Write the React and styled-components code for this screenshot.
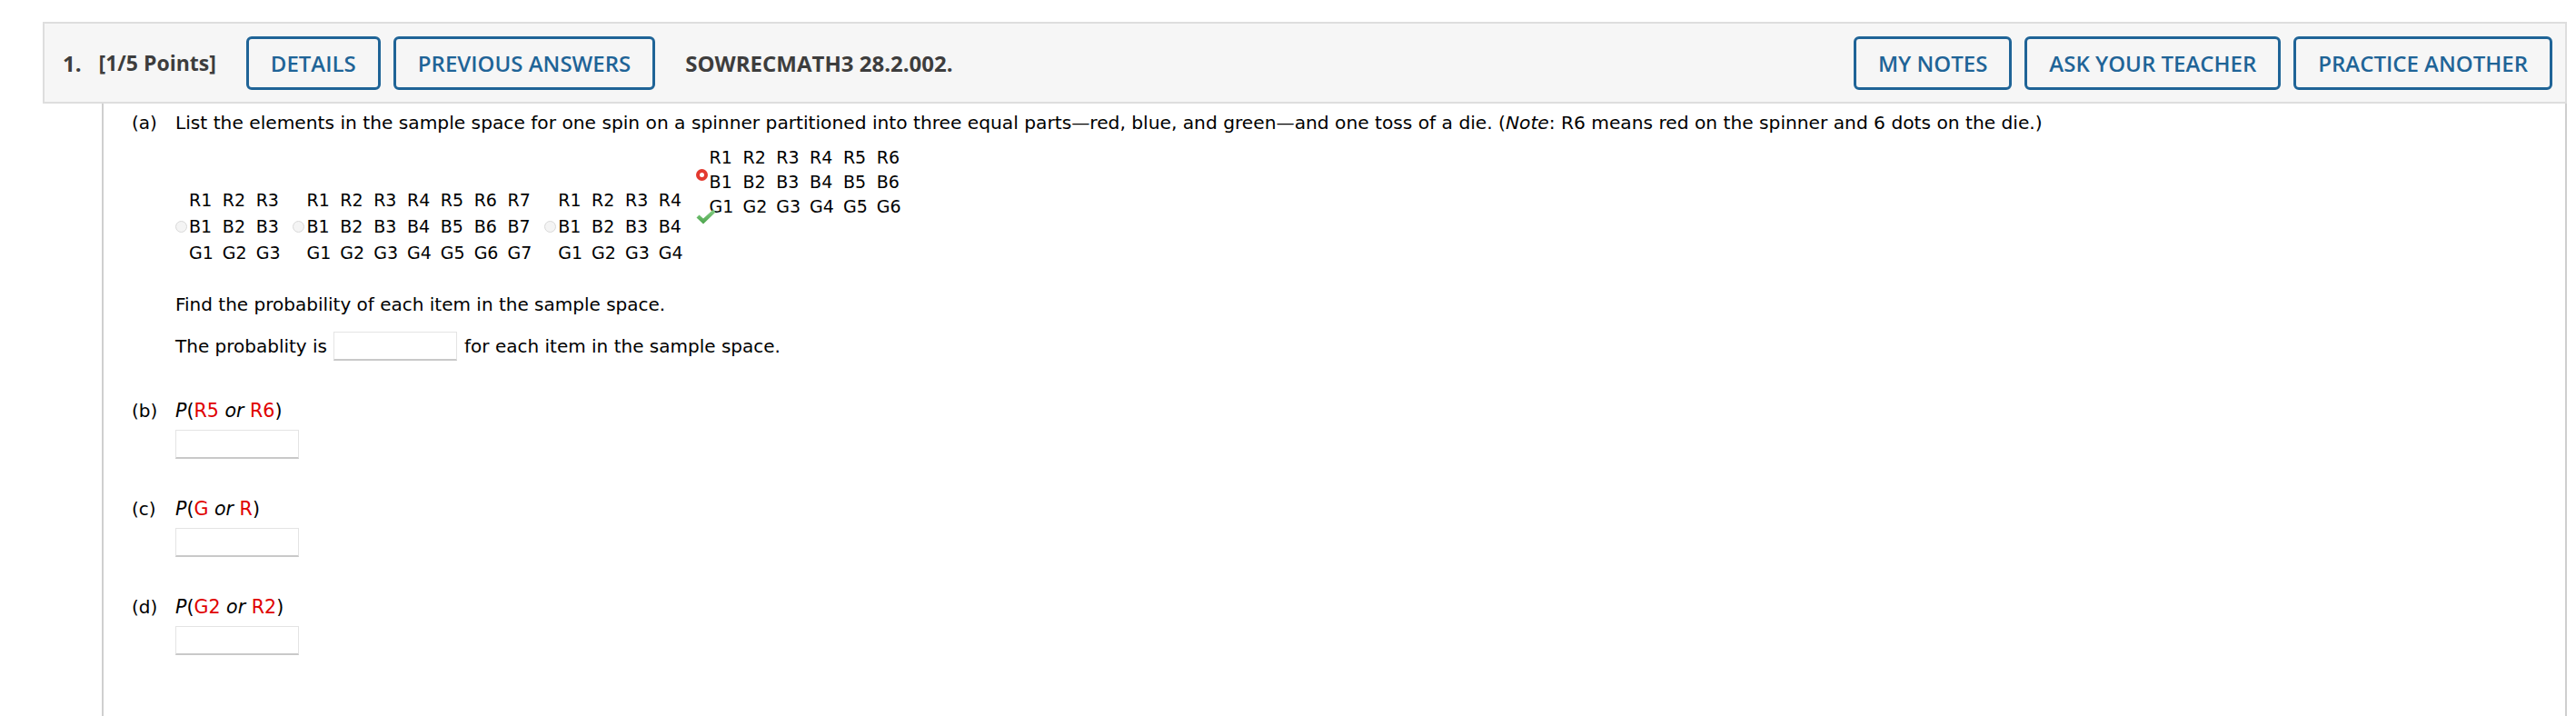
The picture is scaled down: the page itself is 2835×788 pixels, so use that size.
import React from "react";
import styled, { createGlobalStyle } from "styled-components";

const GlobalStyle = createGlobalStyle`
  html, body {
    margin: 0;
    padding: 0;
    background: #fff;
  }
  body {
    font-family: "DejaVu Sans", Verdana, sans-serif;
    color: #000;
  }
`;

const Page = styled.div`
  padding: 24px 10px 0 47px;
`;

const Header = styled.header`
  display: flex;
  align-items: center;
  height: 90px;
  box-sizing: border-box;
  padding: 0 14px 0 20px;
  background: #f6f6f6;
  border: 2px solid #dedede;
  font-family: "Open Sans", sans-serif;
  font-size: 24px;
  color: #3d3d3d;
`;

const Number = styled.span`
  font-weight: 700;
  margin-right: 19px;
`;

const Title = styled.span`
  font-weight: 700;
  font-size: ${(p) => p.$size || 24}px;
  margin: 0 ${(p) => p.$right || 33}px 0 ${(p) => p.$left || 0}px;
  white-space: nowrap;
`;

const ButtonGroup = styled.div`
  display: flex;
  gap: 14px;
  margin-left: ${(p) => (p.$push ? "auto" : "0")};
`;

const Button = styled.button`
  height: 59px;
  padding: 0 24px;
  border: 3px solid #1f6497;
  border-radius: 6px;
  background: transparent;
  color: #1f6497;
  font-family: "Open Sans", sans-serif;
  font-size: 24px;
  font-weight: 600;
  white-space: nowrap;
  cursor: pointer;
`;

const Panel = styled.section`
  margin-left: 65px;
  min-height: 674px;
  box-sizing: border-box;
  border-left: 2px solid #cfcfcf;
  border-right: 2px solid #cfcfcf;
  padding: 6px 0 0 31px;
  display: flex;
  flex-direction: column;
  gap: 40px;
`;

const Part = styled.div`
  display: grid;
  grid-template-columns: 48px 1fr;
  font-size: 20px;
  line-height: 30px;
`;

const Label = styled.div`
  white-space: nowrap;
`;

const Body = styled.div`
  display: flex;
  flex-direction: column;
  align-items: flex-start;
`;

const Prompt = styled.div`
  font-size: ${(p) => p.$size || 20}px;
  white-space: nowrap;
`;

const Options = styled.div`
  display: flex;
  align-items: flex-start;
  gap: 9px;
  margin-top: 10px;
`;

const Option = styled.div`
  position: relative;
  display: flex;
  align-items: center;
  margin-top: ${(p) => p.$drop || 0}px;
`;

const Radio = styled.span`
  flex: none;
  width: 13px;
  height: 13px;
  box-sizing: border-box;
  border-radius: 50%;
  margin-right: -3px;
  margin-bottom: ${(p) => p.$lift || 0}px;
  border: ${(p) => (p.$selected ? "4px solid #e3392f" : "1px solid #d9d9d9")};
  background: ${(p) => (p.$selected ? "#fff" : "#f4f4f4")};
`;

const Grid = styled.table`
  position: relative;
  border-collapse: collapse;
  font-size: 19px;
  line-height: ${(p) => p.$row}px;

  & td {
    padding: 0 5px;
    white-space: nowrap;
  }
`;

const Check = styled.svg`
  position: absolute;
  left: 0;
  top: 70px;
  width: 22px;
  height: 17px;
`;

const Note = styled.p`
  margin: ${(p) => p.$top}px 0 0;
  font-size: 20px;
  line-height: 28px;
  white-space: nowrap;
  display: flex;
  align-items: center;
`;

const Answer = styled.span`
  display: inline-block;
  flex: none;
  width: 136px;
  height: 32px;
  box-sizing: border-box;
  margin: ${(p) => (p.$inline ? "0 8px 0 7px" : "6px 0 0")};
  background: #fff;
  border: 1px solid #e4e4e4;
  border-bottom: 2px solid #c9c9c9;
`;

const Em = styled.i`
  font-style: italic;
`;

const Red = styled.span`
  color: #e00000;
`;

const spaces = [
  { cols: 3, drop: 46, row: 29 },
  { cols: 7, drop: 46, row: 29 },
  { cols: 4, drop: 46, row: 29 },
  { cols: 6, drop: 0, row: 27, selected: true },
];

function SampleSpace({ cols, row }) {
  return (
    <Grid $row={row}>
      <tbody>
        {["R", "B", "G"].map((c) => (
          <tr key={c}>
            {Array.from({ length: cols }, (_, i) => (
              <td key={i}>
                {c}
                {i + 1}
              </td>
            ))}
          </tr>
        ))}
      </tbody>
    </Grid>
  );
}

function Prob({ a, b }) {
  return (
    <Prompt $size={20.6}>
      <Em>P</Em>(<Red>{a}</Red> <Em>or</Em> <Red>{b}</Red>)
    </Prompt>
  );
}

export default function App() {
  return (
    <>
      <GlobalStyle />
      <Page>
        <Header>
          <Number>1.</Number>
          <Title $size={23}>[1/5 Points]</Title>
          <ButtonGroup>
            <Button>DETAILS</Button>
            <Button>PREVIOUS ANSWERS</Button>
          </ButtonGroup>
          <Title $left={33}>SOWRECMATH3 28.2.002.</Title>
          <ButtonGroup $push>
            <Button>MY NOTES</Button>
            <Button>ASK YOUR TEACHER</Button>
            <Button>PRACTICE ANOTHER</Button>
          </ButtonGroup>
        </Header>

        <Panel>
          <Part>
            <Label>(a)</Label>
            <Body>
              <Prompt $size={20.2}>
                List the elements in the sample space for one spin on a spinner
                partitioned into three equal parts—red, blue, and green—and one
                toss of a die. (<Em>Note</Em>: R6 means red on the spinner and 6
                dots on the die.)
              </Prompt>
              <Options>
                {spaces.map((s, i) => (
                  <Option key={i} $drop={s.drop}>
                    <Radio $selected={s.selected} $lift={s.selected ? 16 : 0} />
                    <SampleSpace cols={s.cols} row={s.row} />
                    {s.selected && (
                      <Check viewBox="0 0 22 17">
                        <defs>
                          <linearGradient id="ok" x1="0" y1="0" x2="0" y2="1">
                            <stop offset="0" stopColor="#86d086" />
                            <stop offset="1" stopColor="#4ba34b" />
                          </linearGradient>
                        </defs>
                        <path
                          d="M0.5 9.5 L3.5 6.5 L8 10.5 L19 0.5 L21.5 3.5 L8 16.5 Z"
                          fill="url(#ok)"
                        />
                      </Check>
                    )}
                  </Option>
                ))}
              </Options>
              <Note $top={28}>Find the probability of each item in the sample space.</Note>
              <Note $top={16}>
                The probablity is
                <Answer $inline />
                for each item in the sample space.
              </Note>
            </Body>
          </Part>

          <Part>
            <Label>(b)</Label>
            <Body>
              <Prob a="R5" b="R6" />
              <Answer />
            </Body>
          </Part>

          <Part>
            <Label>(c)</Label>
            <Body>
              <Prob a="G" b="R" />
              <Answer />
            </Body>
          </Part>

          <Part>
            <Label>(d)</Label>
            <Body>
              <Prob a="G2" b="R2" />
              <Answer />
            </Body>
          </Part>
        </Panel>
      </Page>
    </>
  );
}
